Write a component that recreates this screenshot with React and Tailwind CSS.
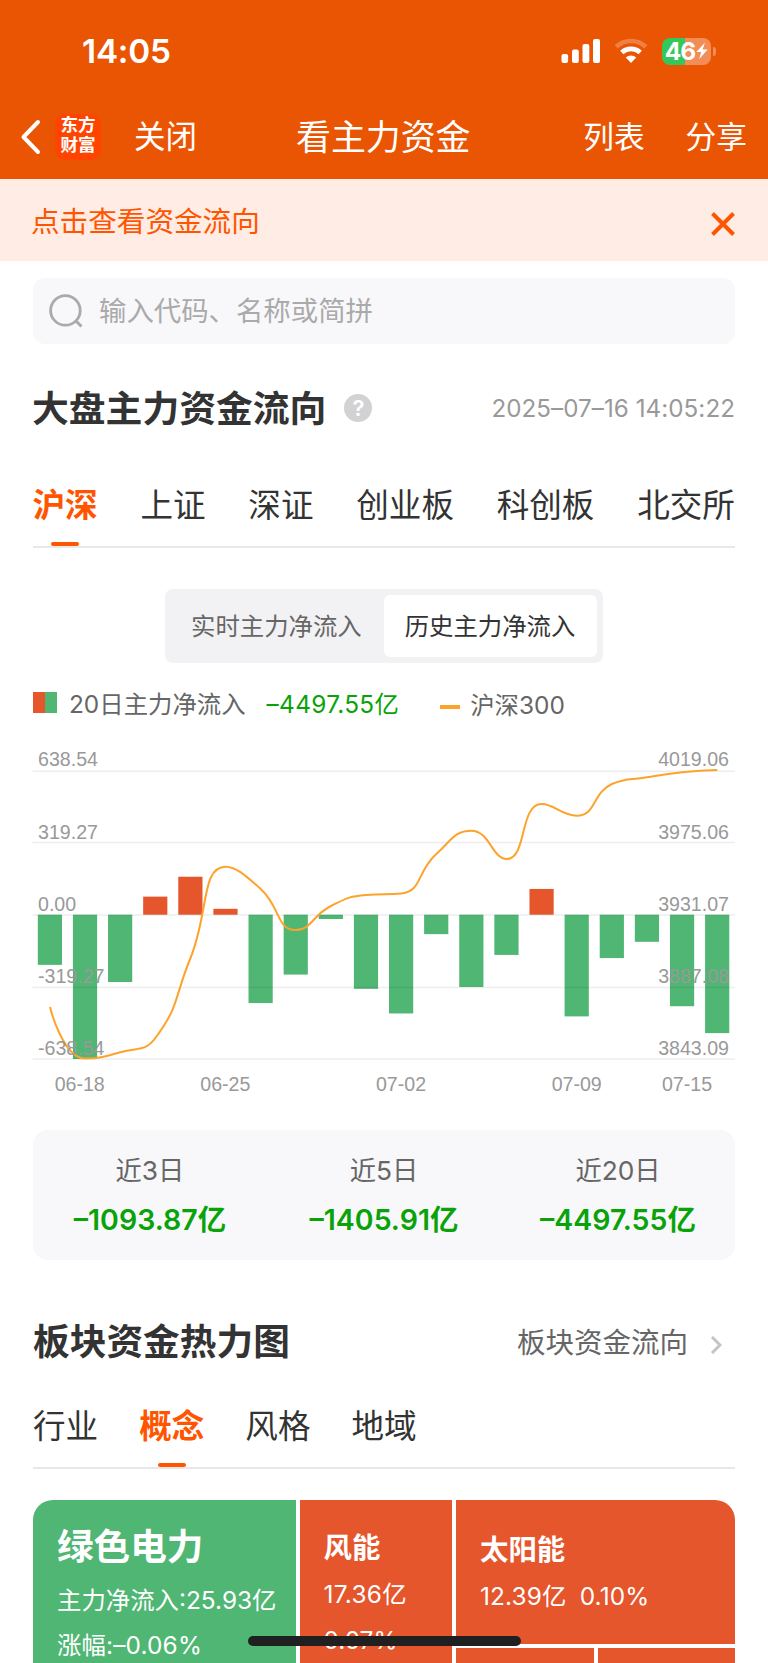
const BARS = [-222, -638.54, -298, 80, 168, 26, -391, -265, -19, -328, -437, -86, -320, -178, 114, -450, -192, -120, -405, -524];

const INDEX_Y = [1007, 1058.5, 1052.3, 1038, 958, 866.7, 889, 930, 906, 895, 893.5, 854, 830.7, 859, 804, 815.7, 784, 777.3, 772.3, 770];

const GRID = [
  { y: 771.3, base: 766.4, left: '638.54', right: '4019.06' },
  { y: 842.5, base: 838.6, left: '319.27', right: '3975.06' },
  { y: 915, base: 911, left: '0.00', right: '3931.07' },
  { y: 987.5, base: 983.2, left: '-319.27', right: '3887.08' },
  { y: 1059, base: 1055.4, left: '-638.54', right: '3843.09' },
];

const DATES = [
  { x: 79.7, text: '06-18' },
  { x: 225.3, text: '06-25' },
  { x: 401, text: '07-02' },
  { x: 576.7, text: '07-09' },
  { x: 687, text: '07-15' },
];

const MARKETS = ['沪深', '上证', '深证', '创业板', '科创板', '北交所'];
const SECTORS = ['行业', '概念', '风格', '地域'];

const STATS = [
  { label: '近3日', value: '–1093.87亿' },
  { label: '近5日', value: '–1405.91亿' },
  { label: '近20日', value: '–4497.55亿' },
];

const ZERO = 914.7;
const STEP = 35.12;

const clamp = (v, a, b) => Math.max(Math.min(v, Math.max(a, b)), Math.min(a, b));

// smooth curve whose control points never overshoot the neighbouring points
function smoothPath(pts) {
  const s = 0.5;
  let d = `M${pts[0][0]} ${pts[0][1]}`;
  let cp = pts[0];
  for (let i = 1; i < pts.length; i++) {
    const prev = pts[i - 1];
    const p = pts[i];
    const next = pts[i + 1];
    let before = p;
    let after = p;
    if (next) {
      const lp = Math.hypot(p[0] - prev[0], p[1] - prev[1]);
      const ln = Math.hypot(next[0] - p[0], next[1] - p[1]);
      const r = ln / (ln + lp);
      after = [0, 1].map(k => clamp(p[k] + (next[k] - prev[k]) * s * r, p[k], next[k]));
      before = [0, 1].map(k => clamp(p[k] - ((after[k] - p[k]) * lp) / ln, p[k], prev[k]));
      after = [0, 1].map(k => p[k] + ((p[k] - before[k]) * ln) / lp);
    }
    d += `C${cp[0]} ${cp[1]} ${before[0]} ${before[1]} ${p[0]} ${p[1]}`;
    cp = after;
  }
  return d;
}

const LINE = smoothPath(INDEX_Y.map((y, i) => [50 + i * STEP, y]));

function StatusBar() {
  return (
    <div className="flex h-[103px] items-center justify-between pl-[82px] pr-[52px]">
      <span className="text-[33.3px] font-semibold leading-none tracking-[-0.2px]">14:05</span>
      <div className="-mt-px flex items-center">
        <svg width="40" height="26" viewBox="0 0 40 26" fill="currentColor">
          <rect x="0.5" y="16" width="6.6" height="9" rx="2" />
          <rect x="11" y="11.5" width="6.8" height="13.5" rx="2" />
          <rect x="21.5" y="6" width="6.8" height="19" rx="2" />
          <rect x="32" y="1" width="7" height="24" rx="2" />
        </svg>
        <svg className="ml-[13px]" width="34" height="26" viewBox="0 0 34 26" fill="none" stroke="currentColor">
          <path d="M2.2 8.8A21.6 21.6 0 0 1 31.8 8.8" strokeWidth="4.6" opacity="0.25" />
          <path d="M7.8 14.4A13.6 13.6 0 0 1 26.2 14.4" strokeWidth="4.8" />
          <path d="M17 25L11.8 19.6A7.6 7.6 0 0 1 22.2 19.6Z" fill="currentColor" stroke="none" />
        </svg>
        <div className="ml-[14px] flex h-[27px] w-[49px] items-center justify-center rounded-[8px] bg-[linear-gradient(90deg,#34c759_47%,#f38d57_47%)]">
          <span className="text-[24.5px] font-bold leading-none tracking-[-1px]">46</span>
          <svg className="ml-px" width="12" height="18" viewBox="0 0 13 18" fill="currentColor">
            <path d="M9.6 0L0.4 10.2H5.6L3.4 18L12.6 7.4H7.2Z" />
          </svg>
        </div>
        <span className="ml-[2px] h-[9px] w-[3px] rounded-r-full bg-[#f38d57]" />
      </div>
    </div>
  );
}

function NavBar() {
  return (
    <div className="flex h-[68px] items-center pl-[20px] pr-[21px]">
      <svg className="-mt-px" width="21" height="36" viewBox="0 0 21 36" fill="none" stroke="currentColor" strokeWidth="4" strokeLinecap="round" strokeLinejoin="round">
        <path d="M18 3L3.5 18L18 33" />
      </svg>
      <div className="-mt-px ml-[14px] flex h-[46px] w-[46px] flex-col items-center justify-center rounded-[10px] bg-[#ff4400] pb-[3px] text-[17.6px] font-bold leading-[20px]">
        <span>东方</span>
        <span>财富</span>
      </div>
      <span className="ml-[33px] text-[31.5px] leading-none">关闭</span>
      <h1 className="ml-[99px] text-[34.9px] leading-none">看主力资金</h1>
      <span className="ml-auto text-[30.7px] leading-none">列表</span>
      <span className="ml-[41px] text-[30.7px] leading-none">分享</span>
    </div>
  );
}

function Tabs({ items, active, className }) {
  return (
    <div className={`flex border-b-2 border-[#e8e8e8] text-[32.6px] leading-none text-[#333] ${className}`}>
      {items.map(name => (
        <div key={name} className={`relative flex items-center pt-[4px] ${name === active ? 'font-bold text-[#ff5500]' : ''}`}>
          {name}
          {name === active && <span className="absolute bottom-0 left-1/2 h-[4px] w-[28px] -translate-x-1/2 rounded-full bg-[#ff5500]" />}
        </div>
      ))}
    </div>
  );
}

function FlowChart() {
  return (
    <svg className="block" width="768" height="370" viewBox="0 735 768 370" fontFamily='"Liberation Sans", Arial, sans-serif' fontSize="19.6">
      {BARS.map((v, i) => {
        const h = (Math.abs(v) / 638.54) * 144.3;
        return <rect key={i} x={37.8 + i * STEP} y={v > 0 ? ZERO - h : ZERO} width="24.2" height={h} fill={v > 0 ? '#e5562d' : '#50b674'} />;
      })}
      {GRID.map(g => (
        <line key={g.y} x1="32.5" x2="735" y1={g.y} y2={g.y} stroke="#000" strokeOpacity="0.07" strokeWidth="1.6" />
      ))}
      <path d={LINE} fill="none" stroke="#fda32b" strokeWidth="2" />
      <g fill="#999">
        {GRID.map(g => (
          <g key={g.y}>
            <text x="38" y={g.base}>{g.left}</text>
            <text x="729" y={g.base} textAnchor="end">{g.right}</text>
          </g>
        ))}
        {DATES.map(d => (
          <text key={d.text} x={d.x} y="1091" textAnchor="middle">{d.text}</text>
        ))}
      </g>
    </svg>
  );
}

function HeatMap() {
  return (
    <div className="mx-[33px] mt-[31px] flex h-[400px] gap-[4px] overflow-hidden rounded-[20px] text-[24.4px] leading-none text-white">
      <div className="w-[262.5px] shrink-0 whitespace-nowrap bg-[#50b674] pl-[24px] pt-[28px]">
        <p className="h-[38px] text-[36.6px] font-bold leading-[38px]">绿色电力</p>
        <p className="mt-[20px] h-[28px] leading-[28px]">主力净流入:25.93亿</p>
        <p className="mt-[17px] h-[28px] leading-[28px] tracking-[0.15px]">涨幅:–0.06%</p>
      </div>
      <div className="w-[152.5px] shrink-0 bg-[#e5562d] pl-[24px] pt-[33px]">
        <p className="h-[30px] text-[28.4px] font-bold leading-[30px]">风能</p>
        <p className="mt-[17px] h-[28px] leading-[28px] tracking-[0.3px]">17.36亿</p>
        <p className="mt-[18px] h-[28px] leading-[28px]">0.07%</p>
      </div>
      <div className="flex flex-1 flex-col gap-[4px]">
        <div className="h-[144px] bg-[#e5562d] pl-[24px] pt-[35px]">
          <p className="h-[30px] text-[28.4px] font-bold leading-[30px]">太阳能</p>
          <p className="mt-[17px] flex h-[28px] gap-[13px] leading-[28px] tracking-[0.15px]">
            <span>12.39亿</span>
            <span>0.10%</span>
          </p>
        </div>
        <div className="flex flex-1 gap-[4px]">
          <div className="flex-1 bg-[#e5562d]" />
          <div className="flex-1 bg-[#e5562d]" />
        </div>
      </div>
    </div>
  );
}

function App() {
  return (
    <div className="relative h-[1663px] w-[768px] overflow-hidden bg-white font-['Inter','Noto_Sans_CJK_SC',sans-serif] text-[#333]">
      <header className="h-[179px] bg-[#ea5504] text-white">
        <StatusBar />
        <NavBar />
      </header>

      <div className="flex h-[82px] items-center justify-between bg-[#ffece4] pl-[31px] pr-[33px] text-[#ff5500]">
        <span className="mt-[4px] text-[28.6px] leading-none">点击查看资金流向</span>
        <svg className="mt-[8px]" width="24" height="24" viewBox="0 0 24 24" fill="none" stroke="currentColor" strokeWidth="4">
          <path d="M1.5 1.5L22.5 22.5M22.5 1.5L1.5 22.5" />
        </svg>
      </div>

      <div className="mx-[33px] mt-[17px] flex h-[65.5px] items-center rounded-[12px] bg-[#f8f8fb] pl-[16px] text-[#aaa]">
        <svg width="34" height="34" viewBox="0 0 34 34" fill="none" stroke="currentColor" strokeWidth="2.8">
          <circle cx="16.4" cy="16.4" r="14.8" />
          <path d="M26.5 26.5L32.5 32.5" strokeWidth="3" />
        </svg>
        <span className="ml-[16px] mt-[2px] text-[27.4px] leading-none">输入代码、名称或简拼</span>
      </div>

      <div className="mx-[33px] mt-[44.5px] flex h-[40px] items-center">
        <h2 className="-ml-px mt-[3px] text-[36.8px] font-bold leading-none">大盘主力资金流向</h2>
        <span className="-mt-px ml-[18px] flex h-[28px] w-[28px] items-center justify-center rounded-full bg-[#d2d2d4] text-[22px] font-semibold leading-none text-white">?</span>
        <span className="ml-auto mt-[3px] text-[24.2px] leading-none tracking-[0.05px] text-[#999]">2025–07–16 14:05:22</span>
      </div>

      <Tabs items={MARKETS} active="沪深" className="ml-[32.5px] mr-[33px] mt-[33px] h-[87px] justify-between" />

      <div className="mx-auto mt-[41px] flex h-[74px] w-[438px] items-center rounded-[8px] bg-[#f2f2f4] pr-[6px] text-[24.4px] leading-none">
        <span className="flex-1 pl-[26px] text-[#666]">实时主力净流入</span>
        <span className="flex h-[62px] w-[213px] items-center justify-center rounded-[6px] bg-white pr-px">历史主力净流入</span>
      </div>

      <div className="flex h-[72px] items-center pl-[33px] pt-[10px] text-[24.4px] leading-none text-[#666]">
        <span className="-mt-[4px] h-[21px] w-[24px] bg-[linear-gradient(90deg,#e5562d_50%,#50b674_50%)]" />
        <span className="ml-[12px]">20日主力净流入</span>
        <span className="ml-[21px] tracking-[0.3px] text-[#09a309]">–4497.55亿</span>
        <span className="ml-[41px] mt-[5px] h-[4px] w-[20px] bg-[#fda32b]" />
        <span className="ml-[10px] mt-[3px]">沪深300</span>
      </div>

      <FlowChart />

      <div className="mx-[33px] mt-[25px] grid h-[130px] grid-cols-3 rounded-[15px] bg-[#f8f8fb] text-center">
        {STATS.map(s => (
          <div key={s.label} className="pt-[26px]">
            <p className="h-[30px] text-[26.3px] leading-[30px] text-[#666]">{s.label}</p>
            <p className="mt-[19px] h-[30px] text-[28.5px] font-semibold leading-[30px] text-[#09a309]">{s.value}</p>
          </div>
        ))}
      </div>

      <div className="mx-[33px] mt-[62px] flex h-[40px] items-center">
        <h2 className="text-[36.7px] font-bold leading-none">板块资金热力图</h2>
        <span className="ml-auto mt-[2px] text-[28.5px] leading-none text-[#666]">板块资金流向</span>
        <svg className="ml-[22px] mr-[13px] mt-[6px]" width="12" height="18" viewBox="0 0 12 18" fill="none" stroke="#c4c4c4" strokeWidth="3">
          <path d="M2 1L10 9L2 17" />
        </svg>
      </div>

      <Tabs items={SECTORS} active="概念" className="mx-[33px] mt-[20px] h-[87px] gap-[41px]" />

      <HeatMap />

      <div className="absolute bottom-[17px] left-[248px] h-[10px] w-[273px] rounded-full bg-[#202020]" />
    </div>
  );
}

export default App;
